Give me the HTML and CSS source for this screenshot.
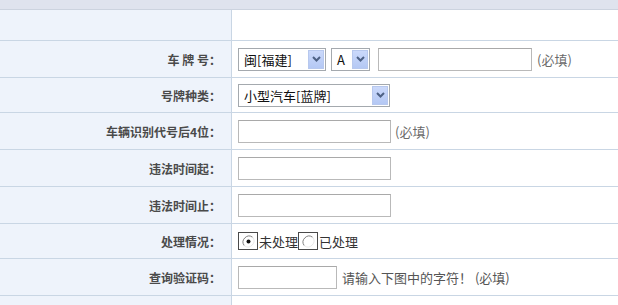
FILE: index.html
```html
<!DOCTYPE html>
<html>
<head>
<meta charset="utf-8">
<link rel="stylesheet" href="styles.css">
</head>
<body>
<div class="topband"></div>
<table class="form">
  <tr class="r-empty"><td class="lbl"></td><td class="val"></td></tr>
  <tr>
    <td class="lbl">车&nbsp;牌&nbsp;号：</td>
    <td class="val">
      <div class="line">
        <div class="sel w-prov"><span class="sel-text">闽[福建]</span><span class="sel-btn"><svg width="9" height="6" viewBox="0 0 9 6"><path d="M1 1 L4.5 4.5 L8 1" fill="none" stroke="#4d6185" stroke-width="2"/></svg></span></div>
        <div class="sel w-letter"><span class="sel-text">A</span><span class="sel-btn"><svg width="9" height="6" viewBox="0 0 9 6"><path d="M1 1 L4.5 4.5 L8 1" fill="none" stroke="#4d6185" stroke-width="2"/></svg></span></div>
        <div class="inp w-plate"></div>
        <span class="note">(必填)</span>
      </div>
    </td>
  </tr>
  <tr class="r-short">
    <td class="lbl">号牌种类：</td>
    <td class="val">
      <div class="line">
        <div class="sel w-type"><span class="sel-text">小型汽车[蓝牌]</span><span class="sel-btn"><svg width="9" height="6" viewBox="0 0 9 6"><path d="M1 1 L4.5 4.5 L8 1" fill="none" stroke="#4d6185" stroke-width="2"/></svg></span></div>
      </div>
    </td>
  </tr>
  <tr>
    <td class="lbl">车辆识别代号后4位：</td>
    <td class="val"><div class="line"><div class="inp w-std"></div><span class="note n-tight">(必填)</span></div></td>
  </tr>
  <tr>
    <td class="lbl">违法时间起：</td>
    <td class="val"><div class="line"><div class="inp w-std"></div></div></td>
  </tr>
  <tr>
    <td class="lbl">违法时间止：</td>
    <td class="val"><div class="line"><div class="inp w-std"></div></div></td>
  </tr>
  <tr class="r-short">
    <td class="lbl">处理情况：</td>
    <td class="val">
      <div class="line">
        <span class="radio"><svg width="13" height="13" viewBox="0 0 13 13"><circle cx="6.5" cy="6.5" r="6" fill="#fff"/><path d="M2.3 10.7 A6 6 0 0 1 10.7 2.3" fill="none" stroke="#808080" stroke-width="1"/><path d="M10.7 2.3 A6 6 0 0 1 2.3 10.7" fill="none" stroke="#e8e8e8" stroke-width="1"/><circle cx="6.5" cy="6.5" r="2" fill="#111"/></svg></span><span class="rtext">未处理</span><span class="radio"><svg width="13" height="13" viewBox="0 0 13 13"><circle cx="6.5" cy="6.5" r="6" fill="#fff"/><path d="M2.3 10.7 A6 6 0 0 1 10.7 2.3" fill="none" stroke="#808080" stroke-width="1"/><path d="M10.7 2.3 A6 6 0 0 1 2.3 10.7" fill="none" stroke="#e8e8e8" stroke-width="1"/></svg></span><span class="rtext">已处理</span>
      </div>
    </td>
  </tr>
  <tr>
    <td class="lbl">查询验证码：</td>
    <td class="val"><div class="line"><div class="inp w-code"></div><span class="hint">请输入下图中的字符！ (必填)</span></div></td>
  </tr>
  <tr class="r-last">
    <td class="lbl"></td>
    <td class="val"><span class="faint">&nbsp;</span></td>
  </tr>
</table>
</body>
</html>
```
FILE: styles.css
```css
html, body {
  margin: 0;
  padding: 0;
  background: #ffffff;
  width: 618px;
  height: 305px;
  overflow: hidden;
  font-family: "Noto Sans CJK SC", "Liberation Sans", sans-serif;
}
.topband {
  height: 9px;
  background: #dfe3ee;
  border-bottom: 1px solid #ccd3df;
}
.form {
  width: 618px;
  border-collapse: collapse;
  table-layout: fixed;
}
.form td {
  border-bottom: 1px solid #c9d6e4;
  height: 36px;
  padding: 0;
  vertical-align: middle;
}
.form tr.r-empty td {
  height: 30px;
}
.form tr.r-short td {
  height: 34px;
}
.form tr.r-last td {
  border-bottom: none;
}
.lbl {
  width: 221px;
  padding-right: 10px !important;
  background: #eef3fb;
  border-right: 1px solid #c9d6e4;
  text-align: right;
  font-size: 12px;
  font-weight: bold;
  color: #4a4a4a;
  white-space: nowrap;
}
.val {
  padding-left: 6px !important;
  background: #ffffff;
}
.line {
  display: flex;
  align-items: center;
  font-size: 13px;
  color: #222;
}
.sel {
  display: flex;
  align-items: center;
  justify-content: space-between;
  box-sizing: border-box;
  height: 23px;
  border: 1px solid #a4a9ae;
  background: #fff;
  padding: 1px;
  margin-right: 5px;
}
.sel-text {
  padding-left: 4px;
  font-size: 13px;
  color: #111;
  line-height: 19px;
}
.sel-btn {
  box-sizing: border-box;
  width: 16px;
  height: 19px;
  background: linear-gradient(#cbd9fb, #b4c8f4);
  border: 1px solid #b7c8ee;
  display: flex;
  align-items: center;
  justify-content: center;
}
.w-prov { width: 88px; }
.w-letter { width: 39px; margin-right: 8px; }
.w-type { width: 152px; }
.inp {
  box-sizing: border-box;
  height: 23px;
  border: 1px solid #b9b9b9;
  border-top-color: #a9a9a9;
  background: #fff;
}
.w-plate { width: 154px; }
.w-std { width: 153px; }
.w-code { width: 99px; }
.note {
  margin-left: 5px;
  color: #6a6a6a;
  font-size: 13px;
}
.n-tight { margin-left: 4px; }
.radio {
  box-sizing: border-box;
  width: 20px;
  height: 18px;
  border: 1px solid #4a4a4a;
  display: flex;
  align-items: center;
  justify-content: center;
}
.rtext {
  font-size: 13px;
  color: #333;
  margin: 0 0 0 1px;
}
.hint {
  margin-left: 5px;
  color: #555;
  font-size: 13px;
}
.faint {
  font-size: 12px;
  color: #eee;
}
```
